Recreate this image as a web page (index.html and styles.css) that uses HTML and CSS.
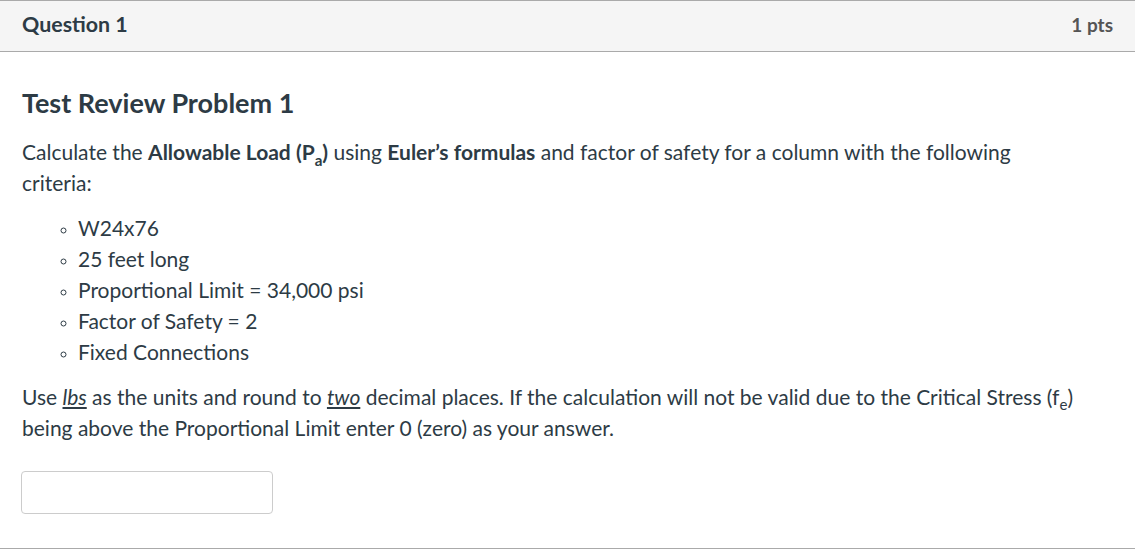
FILE: index.html
```html
<!DOCTYPE html>
<html>
<head>
<meta charset="utf-8">
<link rel="stylesheet" href="styles.css">
</head>
<body>
<div class="question">
  <div class="header">
    <span class="name">Question 1</span>
    <span class="points">1 pts</span>
  </div>
  <div class="text">
    <h3 class="title">Test Review Problem 1</h3>
    <p class="intro">Calculate the <strong>Allowable Load (P<sub>a</sub>)</strong> using <strong>Euler’s formulas</strong> and factor of safety for a column with the following criteria:</p>
    <ul class="criteria">
      <li>W24x76</li>
      <li>25 feet long</li>
      <li>Proportional Limit = 34,000 psi</li>
      <li>Factor of Safety = 2</li>
      <li>Fixed Connections</li>
    </ul>
    <p class="note">Use <em class="u">lbs</em> as the units and round to <em class="u">two</em> decimal places. If the calculation will not be valid due to the Critical Stress (f<sub>e</sub>) being above the Proportional Limit enter 0 (zero) as your answer.</p>
    <div class="answer">
      <input type="text" class="answer-input">
    </div>
  </div>
</div>
</body>
</html>
```

FILE: styles.css
```css
html, body {
  margin: 0;
  padding: 0;
  background: #fff;
}
body {
  font-family: Lato, "Noto Sans", sans-serif;
  color: #2d3b45;
}
.question {
  border-top: 1px solid #aaa;
  border-bottom: 1px solid #aaa;
  height: 549px;
  box-sizing: border-box;
}
.header {
  display: flex;
  justify-content: space-between;
  align-items: center;
  background: #f5f5f5;
  border-bottom: 1px solid #aaa;
  height: 51px;
  padding: 0 22px 4px;
  box-sizing: border-box;
}
.name {
  font-size: 21.4px;
  font-weight: 700;
}
.points {
  font-size: 19px;
  font-weight: 700;
  color: #555;
}
.text {
  padding: 0 55px 0 22px;
  font-size: 21px;
  line-height: 31px;
}
.title {
  font-size: 27px;
  font-weight: 700;
  margin: 35px 0 0;
  line-height: 32px;
}
p {
  margin: 0;
}
.intro {
  margin-top: 17px;
}
.intro sub {
  vertical-align: -6px;
}
sub {
  font-size: 0.72em;
  line-height: 0;
}
.criteria {
  list-style: circle;
  margin: 14px 0 0;
  padding-left: 56px;
}
.criteria li::marker {
  font-size: 15px;
}
.note {
  margin-top: 14px;
}
.u {
  text-decoration: underline;
}
.answer {
  margin-top: 28px;
  margin-left: -1px;
}
.answer-input {
  display: block;
  width: 252px;
  height: 43px;
  box-sizing: border-box;
  border: 1px solid #ccc;
  border-radius: 4px;
  margin: 0;
}
```
